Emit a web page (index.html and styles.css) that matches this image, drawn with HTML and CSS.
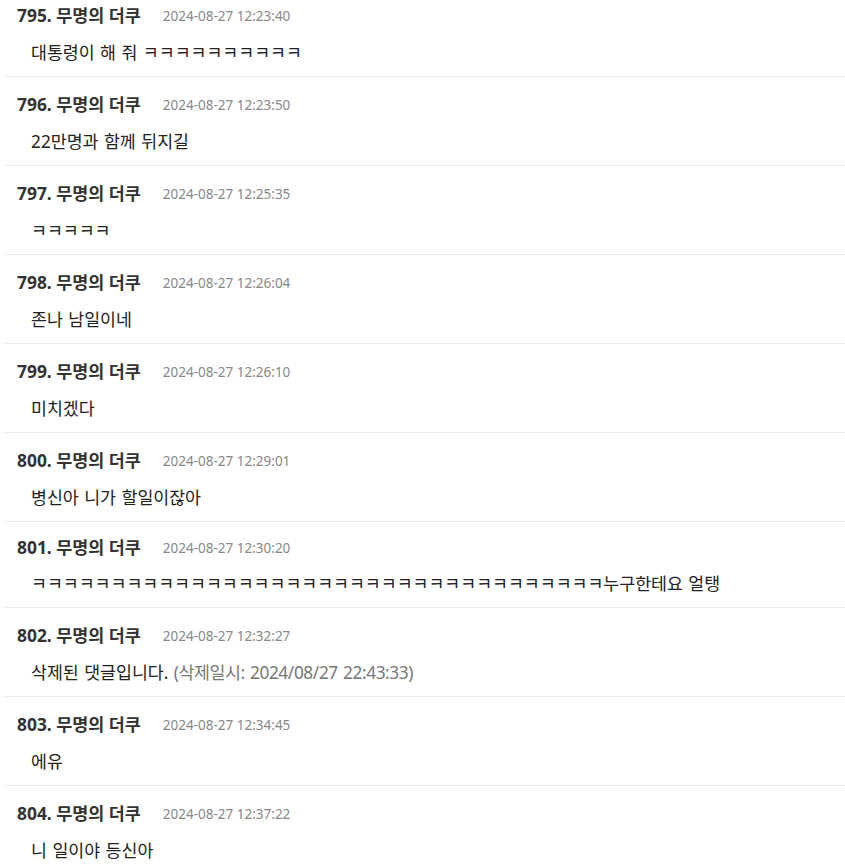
FILE: index.html
```html
<!DOCTYPE html>
<html lang="ko">
<head>
  <meta charset="UTF-8" />
  <meta name="viewport" content="width=device-width, initial-scale=1.0"/>
  <title>댓글</title>
  <link rel="stylesheet" href="styles.css">
</head>
<body>

  <ul class="comments">
    <li class="comment">
      <div class="comment-head"><span class="author">795. 무명의 더쿠</span><span class="date">2024-08-27 12:23:40</span></div>
      <div class="comment-body">대통령이 해 줘 ㅋㅋㅋㅋㅋㅋㅋㅋㅋㅋ</div>
    </li>
    <li class="comment">
      <div class="comment-head"><span class="author">796. 무명의 더쿠</span><span class="date">2024-08-27 12:23:50</span></div>
      <div class="comment-body">22만명과 함께 뒤지길</div>
    </li>
    <li class="comment">
      <div class="comment-head"><span class="author">797. 무명의 더쿠</span><span class="date">2024-08-27 12:25:35</span></div>
      <div class="comment-body">ㅋㅋㅋㅋㅋ</div>
    </li>
    <li class="comment">
      <div class="comment-head"><span class="author">798. 무명의 더쿠</span><span class="date">2024-08-27 12:26:04</span></div>
      <div class="comment-body">존나 남일이네</div>
    </li>
    <li class="comment">
      <div class="comment-head"><span class="author">799. 무명의 더쿠</span><span class="date">2024-08-27 12:26:10</span></div>
      <div class="comment-body">미치겠다</div>
    </li>
    <li class="comment">
      <div class="comment-head"><span class="author">800. 무명의 더쿠</span><span class="date">2024-08-27 12:29:01</span></div>
      <div class="comment-body">병신아 니가 할일이잖아</div>
    </li>
    <li class="comment short">
      <div class="comment-head"><span class="author">801. 무명의 더쿠</span><span class="date">2024-08-27 12:30:20</span></div>
      <div class="comment-body">ㅋㅋㅋㅋㅋㅋㅋㅋㅋㅋㅋㅋㅋㅋㅋㅋㅋㅋㅋㅋㅋㅋㅋㅋㅋㅋㅋㅋㅋㅋㅋㅋㅋㅋㅋㅋ누구한테요 얼탱</div>
    </li>
    <li class="comment">
      <div class="comment-head"><span class="author">802. 무명의 더쿠</span><span class="date">2024-08-27 12:32:27</span></div>
      <div class="comment-body">삭제된 댓글입니다. <span class="deleted">(삭제일시: 2024/08/27 22:43:33)</span></div>
    </li>
    <li class="comment">
      <div class="comment-head"><span class="author">803. 무명의 더쿠</span><span class="date">2024-08-27 12:34:45</span></div>
      <div class="comment-body">에유</div>
    </li>
    <li class="comment">
      <div class="comment-head"><span class="author">804. 무명의 더쿠</span><span class="date">2024-08-27 12:37:22</span></div>
      <div class="comment-body">니 일이야 등신아</div>
    </li>
  </ul>

</body>
</html>
```

FILE: styles.css
```css
body {
  margin: 0;
  font-family: "Noto Sans", "Noto Sans CJK KR", sans-serif;
  color: #333;
  background: #fff;
}
.comments {
  list-style: none;
  margin: -12px 0 0 5px;
  padding: 0;
}
.comment {
  padding: 16px 12px 11px;
  border-bottom: 1px solid #ebebeb;
}
.comment-head {
  display: flex;
  align-items: center;
  gap: 22px;
  height: 22px;
  line-height: 22px;
}
.author {
  font-size: 17.4px;
  font-weight: bold;
  color: #333;
}
.date {
  font-size: 13.5px;
  color: #888;
  padding-top: 1px;
}
.comment-body {
  margin-top: 15px;
  padding-left: 14px;
  height: 24px;
  font-size: 17.3px;
  line-height: 24px;
  color: #222;
  white-space: nowrap;
  word-spacing: 1px;
}
.comment.short {
  padding-top: 14px;
}
.comment.short .comment-body {
  margin-top: 14px;
}
.deleted {
  color: #777;
  letter-spacing: -0.4px;
}
```
